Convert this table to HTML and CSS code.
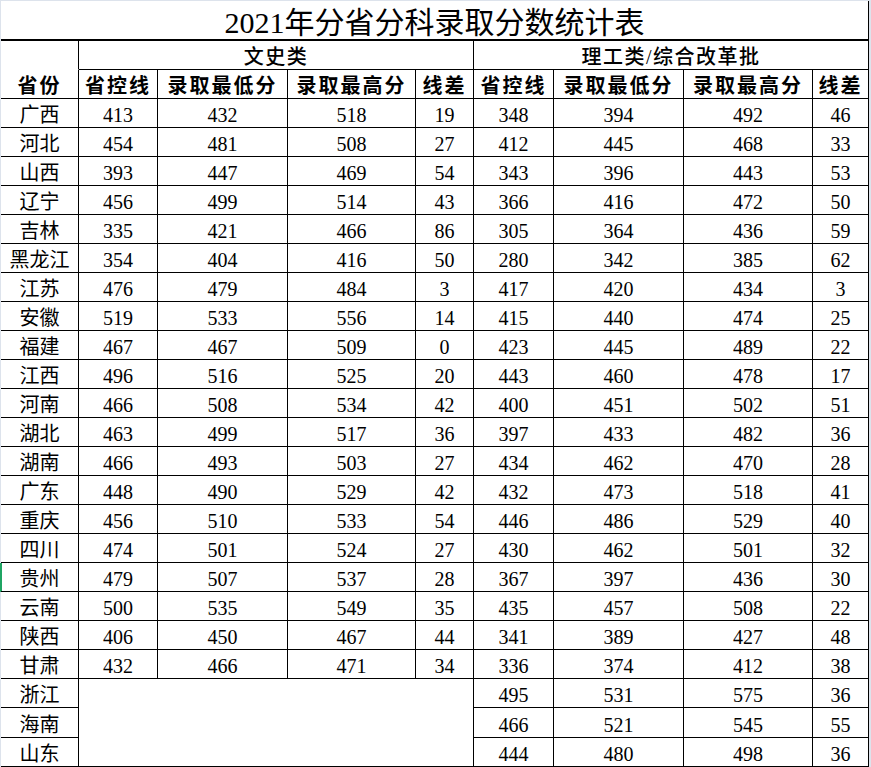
FILE: index.html
```html
<!DOCTYPE html>
<html lang="zh-CN">
<head>
<meta charset="utf-8">
<title>2021年分省分科录取分数统计表</title>
<link rel="stylesheet" href="styles.css">
</head>
<body>
<table class="sheet">
  <colgroup>
    <col class="c0"><col class="c1"><col class="c2"><col class="c3"><col class="c4">
    <col class="c5"><col class="c6"><col class="c7"><col class="c8">
  </colgroup>
  <tr class="title-row"><td class="title" colspan="9">2021年分省分科录取分数统计表</td></tr>
  <tr class="group-row">
    <td class="corner"></td>
    <td class="group" colspan="4">文史类</td>
    <td class="group" colspan="4">理工类/综合改革批</td>
  </tr>
  <tr class="head-row">
    <td class="head">省份</td>
    <td class="head">省控线</td><td class="head">录取最低分</td><td class="head">录取最高分</td><td class="head">线差</td>
    <td class="head">省控线</td><td class="head">录取最低分</td><td class="head">录取最高分</td><td class="head">线差</td>
  </tr>
  <tr><td>广西</td><td>413</td><td>432</td><td>518</td><td>19</td><td>348</td><td>394</td><td>492</td><td>46</td></tr>
  <tr><td>河北</td><td>454</td><td>481</td><td>508</td><td>27</td><td>412</td><td>445</td><td>468</td><td>33</td></tr>
  <tr><td>山西</td><td>393</td><td>447</td><td>469</td><td>54</td><td>343</td><td>396</td><td>443</td><td>53</td></tr>
  <tr><td>辽宁</td><td>456</td><td>499</td><td>514</td><td>43</td><td>366</td><td>416</td><td>472</td><td>50</td></tr>
  <tr><td>吉林</td><td>335</td><td>421</td><td>466</td><td>86</td><td>305</td><td>364</td><td>436</td><td>59</td></tr>
  <tr><td>黑龙江</td><td>354</td><td>404</td><td>416</td><td>50</td><td>280</td><td>342</td><td>385</td><td>62</td></tr>
  <tr><td>江苏</td><td>476</td><td>479</td><td>484</td><td>3</td><td>417</td><td>420</td><td>434</td><td>3</td></tr>
  <tr><td>安徽</td><td>519</td><td>533</td><td>556</td><td>14</td><td>415</td><td>440</td><td>474</td><td>25</td></tr>
  <tr><td>福建</td><td>467</td><td>467</td><td>509</td><td>0</td><td>423</td><td>445</td><td>489</td><td>22</td></tr>
  <tr><td>江西</td><td>496</td><td>516</td><td>525</td><td>20</td><td>443</td><td>460</td><td>478</td><td>17</td></tr>
  <tr><td>河南</td><td>466</td><td>508</td><td>534</td><td>42</td><td>400</td><td>451</td><td>502</td><td>51</td></tr>
  <tr><td>湖北</td><td>463</td><td>499</td><td>517</td><td>36</td><td>397</td><td>433</td><td>482</td><td>36</td></tr>
  <tr><td>湖南</td><td>466</td><td>493</td><td>503</td><td>27</td><td>434</td><td>462</td><td>470</td><td>28</td></tr>
  <tr><td>广东</td><td>448</td><td>490</td><td>529</td><td>42</td><td>432</td><td>473</td><td>518</td><td>41</td></tr>
  <tr><td>重庆</td><td>456</td><td>510</td><td>533</td><td>54</td><td>446</td><td>486</td><td>529</td><td>40</td></tr>
  <tr><td>四川</td><td>474</td><td>501</td><td>524</td><td>27</td><td>430</td><td>462</td><td>501</td><td>32</td></tr>
  <tr><td class="mark">贵州</td><td>479</td><td>507</td><td>537</td><td>28</td><td>367</td><td>397</td><td>436</td><td>30</td></tr>
  <tr><td>云南</td><td>500</td><td>535</td><td>549</td><td>35</td><td>435</td><td>457</td><td>508</td><td>22</td></tr>
  <tr><td>陕西</td><td>406</td><td>450</td><td>467</td><td>44</td><td>341</td><td>389</td><td>427</td><td>48</td></tr>
  <tr><td>甘肃</td><td>432</td><td>466</td><td>471</td><td>34</td><td>336</td><td>374</td><td>412</td><td>38</td></tr>
  <tr><td>浙江</td><td class="blank" colspan="4" rowspan="3"></td><td>495</td><td>531</td><td>575</td><td>36</td></tr>
  <tr class="tall"><td>海南</td><td>466</td><td>521</td><td>545</td><td>55</td></tr>
  <tr><td>山东</td><td>444</td><td>480</td><td>498</td><td>36</td></tr>
</table>
</body>
</html>
```

FILE: styles.css
```css
html, body {
  margin: 0;
  padding: 0;
  background: #dde3ec;
}

body {
  padding: 1px 0 0 1px;
  width: 871px;
  height: 767px;
  box-sizing: border-box;
  overflow: hidden;
}

.sheet {
  table-layout: fixed;
  border-collapse: separate;
  border-spacing: 0;
  width: 868px;
  background: #ffffff;
  color: #000000;
  font-family: "Liberation Serif", "Noto Sans CJK SC", serif;
  font-size: 20px;
}

.c0 { width: 78px; }
.c1 { width: 79px; }
.c2 { width: 130px; }
.c3 { width: 128px; }
.c4 { width: 58px; }
.c5 { width: 80px; }
.c6 { width: 130px; }
.c7 { width: 129px; }
.c8 { width: 56px; }

.sheet td {
  box-sizing: border-box;
  height: 29px;
  padding: 4px 0 0 0;
  line-height: 24px;
  text-align: center;
  vertical-align: top;
  white-space: nowrap;
  overflow: hidden;
  border-right: 1px solid #000000;
  border-bottom: 1px solid #000000;
}

.sheet .tall td {
  height: 30px;
  padding-top: 5px;
}

.sheet .title {
  height: 40px;
  padding-top: 5px;
  line-height: 33px;
  font-size: 30px;
  border-bottom: 2px solid #000000;
}

.sheet .corner {
  border-bottom-color: transparent;
}

.sheet .group {
  letter-spacing: 1.5px;
  font-weight: 500;
}

.sheet .head {
  letter-spacing: 2px;
  font-weight: 700;
}

.sheet .blank {
  vertical-align: top;
}

.sheet .mark {
  box-shadow: -1px 0 0 #1fa463, inset 1px 0 0 #1fa463;
}
```
